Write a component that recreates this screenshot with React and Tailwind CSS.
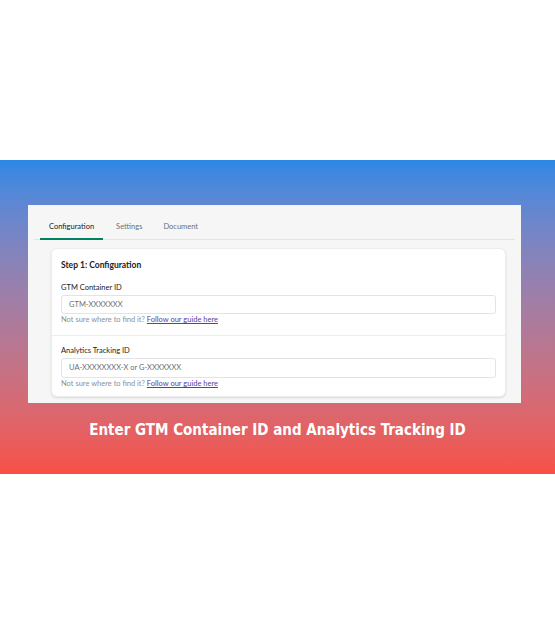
export default function App() {
  const ui = { fontFamily: 'Lato, "Noto Sans", sans-serif' };
  return (
    <div className="w-[555px] h-[635px] bg-white flex flex-col" style={ui}>
      <div className="h-[160px] shrink-0" />
      <div className="h-[314px] shrink-0 bg-gradient-to-b from-[#2a88e6] to-[#f84f46] flex flex-col items-center">
        <div className="mt-[45px] ml-[-6px] w-[493px] bg-[#f6f6f7] flex flex-col pb-[6px]">
          <div className="mx-[6px] flex items-end border-b border-[#e3e4e6] h-[35px] pl-[6px]">
            <div className="px-[9px] h-full flex items-center pt-[10px] border-b-2 border-[#008060] -mb-px text-[7.5px] text-[#202223]">Configuration</div>
            <div className="px-[9px] h-full flex items-center pt-[10px] text-[7.5px] text-[#6d7175] ml-[4px]">Settings</div>
            <div className="px-[9px] h-full flex items-center pt-[10px] text-[7.5px] text-[#6d7175] ml-[3px]">Document</div>
          </div>
          <div className="mt-[8px] ml-[23px] mr-[15px] bg-white rounded-[6px] border border-[#ececec] shadow-[0_1px_2px_rgba(0,0,0,0.12)]">
            <div className="px-[9px] pt-[10px] pb-[10px] border-b border-[#ececed]">
              <div className="h-[12px] leading-[12px] text-[8.5px] font-bold text-[#202223]">Step 1: Configuration</div>
              <div className="mt-[11px] h-[12px] leading-[12px] text-[7.5px] text-[#202223]">GTM Container ID</div>
              <div className="mt-[1px] h-[19px] border border-[#e1e3e5] rounded-[3px] flex items-center pl-[7px] text-[7.5px] text-[#6d7175]">GTM-XXXXXXX</div>
              <div className="mt-[1px] h-[10px] leading-[10px] text-[7.5px] text-[#8c9196]">
                Not sure where to find it? <span className="text-[#5e3e9e] underline">Follow our guide here</span>
              </div>
            </div>
            <div className="px-[9px] pt-[9px] pb-[7px]">
              <div className="h-[12px] leading-[12px] text-[7.5px] text-[#202223]">Analytics Tracking ID</div>
              <div className="mt-[1px] h-[20px] border border-[#e1e3e5] rounded-[3px] flex items-center pl-[7px] text-[7.5px] text-[#6d7175]">UA-XXXXXXXX-X or G-XXXXXXX</div>
              <div className="mt-[1px] h-[10px] leading-[10px] text-[7.5px] text-[#8c9196]">
                Not sure where to find it? <span className="text-[#5e3e9e] underline">Follow our guide here</span>
              </div>
            </div>
          </div>
        </div>
        <div
          className="mt-[17px] h-[20px] leading-[20px] text-[15px] font-bold text-white"
          style={{ fontFamily: '"DejaVu Sans Condensed", "DejaVu Sans", sans-serif' }}
        >
          Enter GTM Container ID and Analytics Tracking ID
        </div>
      </div>
      <div className="flex-1" />
    </div>
  );
}
